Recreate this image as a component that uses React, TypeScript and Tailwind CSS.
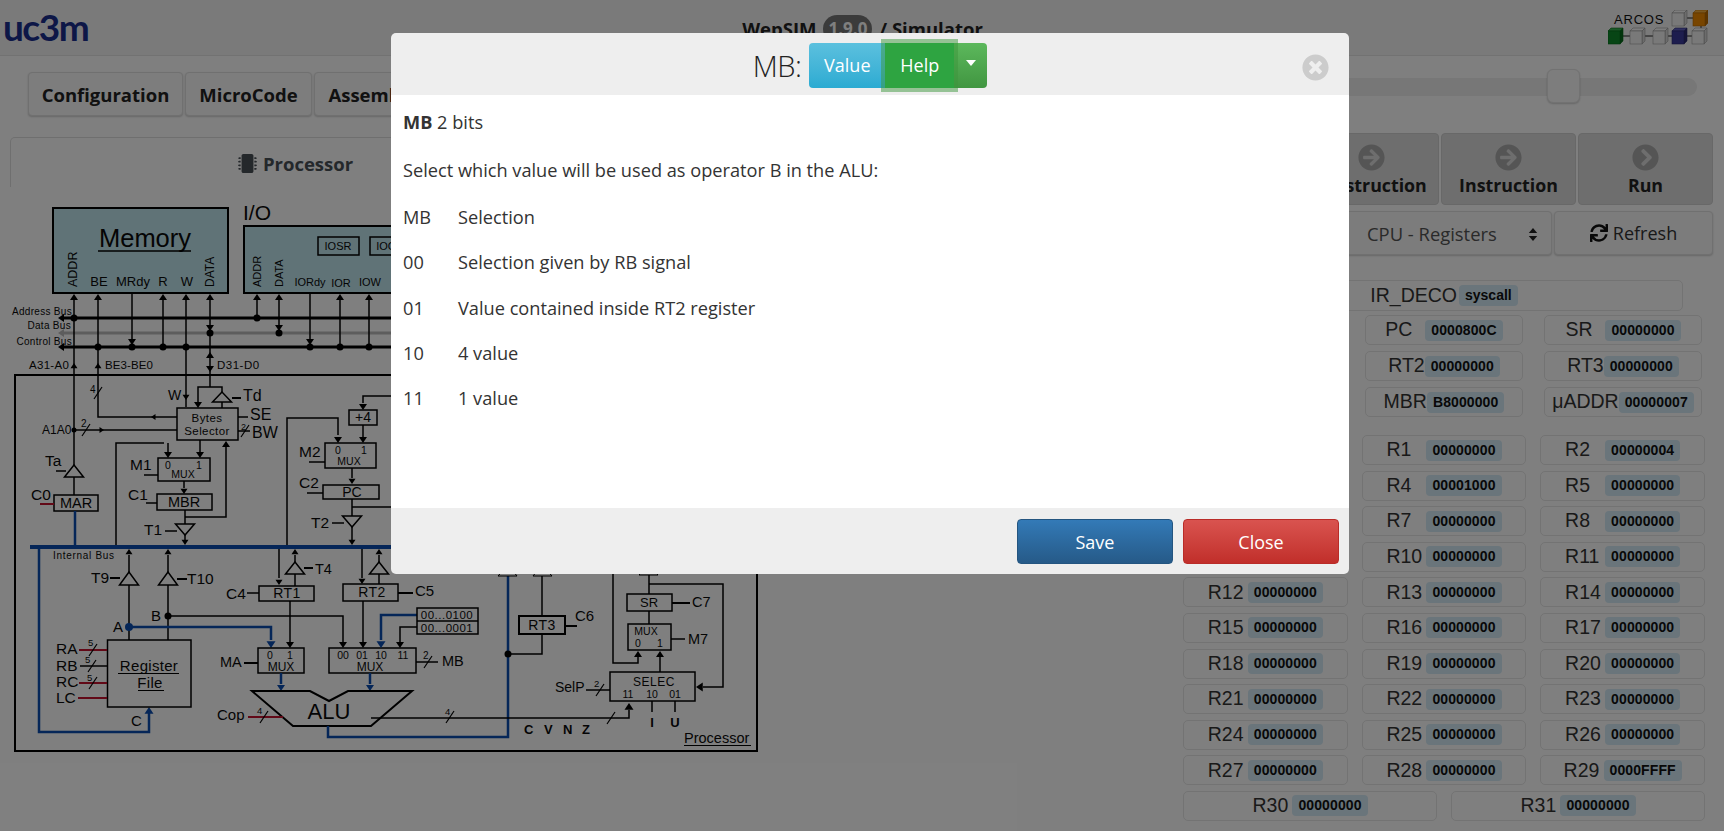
import React from 'react';
import { FaArrowCircleRight, FaChevronCircleRight, FaMicrochip, FaSync, FaTimesCircle } from 'react-icons/fa';

const BLUE = '#0a4db0';
const RED = '#c4122f';

const Wire = ({ d, c = '#000', w = 1.5 }: { d: string; c?: string; w?: number }) => (
  <path d={d} fill="none" stroke={c} strokeWidth={w} />
);

const Head = ({ x, y, dir, c = '#000', s = 5 }: { x: number; y: number; dir: 'u' | 'd' | 'l' | 'r'; c?: string; s?: number }) => {
  const l = s * 1.5;
  const pts = {
    u: `${x},${y} ${x - s},${y + l} ${x + s},${y + l}`,
    d: `${x},${y} ${x - s},${y - l} ${x + s},${y - l}`,
    l: `${x},${y} ${x + l},${y - s} ${x + l},${y + s}`,
    r: `${x},${y} ${x - l},${y - s} ${x - l},${y + s}`,
  }[dir];
  return <polygon points={pts} fill={c} />;
};

const Lbl = ({ x, y, s = 15, a = 'start', b = false, rot = false, sp = 0, children }: { x: number; y: number; s?: number; a?: 'start' | 'middle' | 'end'; b?: boolean; rot?: boolean; sp?: number; children: React.ReactNode }) => (
  <text x={x} y={y} fontSize={s} textAnchor={a} fontWeight={b ? 700 : 400} letterSpacing={sp} fill="#0a0a0a" transform={rot ? `rotate(-90 ${x} ${y})` : undefined}>
    {children}
  </text>
);

const Box = ({ x, y, w, h, sw = 1.5 }: { x: number; y: number; w: number; h: number; sw?: number }) => (
  <rect x={x} y={y} width={w} height={h} fill="none" stroke="#000" strokeWidth={sw} />
);

const Dot = ({ x, y, c = '#000', r = 3.5 }: { x: number; y: number; c?: string; r?: number }) => <circle cx={x} cy={y} r={r} fill={c} />;

// tri-state buffers, apex first
const Tri = ({ x, y, h = 12, up = true }: { x: number; y: number; h?: number; up?: boolean }) => (
  <polygon points={`${x},${y} ${x - 9.5},${up ? y + h : y - h} ${x + 9.5},${up ? y + h : y - h}`} fill="#fff" stroke="#000" strokeWidth={1.5} />
);

const Slash = ({ x, y }: { x: number; y: number }) => <line x1={x - 4} y1={y + 6} x2={x + 4} y2={y - 6} stroke="#000" strokeWidth={1.2} />;

const ProcessorDiagram = () => (
  <svg viewBox="0 190 770 570" className="block w-[770px] h-[570px] [font-family:'Liberation_Sans',sans-serif]">
    {/* Memory and I/O */}
    <rect x={53} y={208} width={175} height={85} fill="#c0e6ee" stroke="#000" strokeWidth={2} />
    <Lbl x={145} y={247} s={25.5} a="middle">Memory</Lbl>
    <line x1={98} y1={251} x2={191} y2={251} stroke="#000" strokeWidth={1.5} />
    <Lbl x={77} y={287} s={12.5} rot>ADDR</Lbl>
    <Lbl x={214} y={287} s={12} rot>DATA</Lbl>
    <Lbl x={99} y={286} s={13} a="middle">BE</Lbl>
    <Lbl x={133} y={286} s={13} a="middle">MRdy</Lbl>
    <Lbl x={163} y={286} s={13} a="middle">R</Lbl>
    <Lbl x={187} y={286} s={13} a="middle">W</Lbl>
    <Lbl x={243} y={220} s={21}>I/O</Lbl>
    <rect x={244} y={226} width={370} height={67} fill="#c0e6ee" stroke="#000" strokeWidth={2} />
    <Box x={318} y={237} w={41} h={18} />
    <Lbl x={338} y={250} s={11} a="middle">IOSR</Lbl>
    <Box x={370} y={237} w={41} h={18} />
    <Lbl x={390} y={250} s={11} a="middle">IOCR</Lbl>
    <Lbl x={261} y={287} s={11} rot>ADDR</Lbl>
    <Lbl x={283} y={287} s={11} rot>DATA</Lbl>
    <Lbl x={310} y={286} s={11} a="middle">IORdy</Lbl>
    <Lbl x={341} y={287} s={11} a="middle">IOR</Lbl>
    <Lbl x={370} y={286} s={11} a="middle">IOW</Lbl>

    {/* System buses */}
    <Lbl x={72} y={315} s={10} a="end" sp={0.3}>Address Bus</Lbl>
    <Lbl x={71} y={329} s={10} a="end" sp={0.3}>Data Bus</Lbl>
    <Lbl x={72} y={345} s={10} a="end" sp={0.3}>Control Bus</Lbl>
    <Wire d="M62 318H610" w={3} />
    <Wire d="M62 333H610" c="#bbb" w={3} />
    <Wire d="M62 347H610" w={3} />
    <Head x={58} y={318} dir="l" s={4} />
    <Head x={58} y={333} dir="l" s={4} c="#bbb" />
    <Head x={58} y={347} dir="l" s={4} />
    <Lbl x={29} y={369} s={11.5} sp={0.3}>A31-A0</Lbl>
    <Lbl x={105} y={369} s={11.5} sp={0.1}>BE3-BE0</Lbl>
    <Lbl x={217} y={369} s={11.5} sp={0.5}>D31-D0</Lbl>

    {/* Processor frame */}
    <Box x={15} y={375} w={742} h={376} sw={2} />

    {/* Memory connections */}
    <Wire d="M74 296V465" />
    <Head x={74} y={294} dir="u" s={4} />
    <Head x={74} y={363} dir="u" s={3.5} />
    <Dot x={74} y={318} />
    <Wire d="M98 296V417H177" />
    <Head x={98} y={294} dir="u" s={4} />
    <Head x={98} y={363} dir="u" s={3.5} />
    <Head x={151} y={417} dir="l" s={3} />
    <Dot x={98} y={347} />
    <Slash x={98} y={393} />
    <Lbl x={90} y={393} s={10}>4</Lbl>
    <Wire d="M132 293V342" />
    <Head x={132} y={345} dir="d" s={4} />
    <Dot x={132} y={347} />
    <Wire d="M163 296V347" />
    <Head x={163} y={294} dir="u" s={4} />
    <Dot x={163} y={347} />
    <Wire d="M186 296V407" />
    <Head x={186} y={294} dir="u" s={4} />
    <Head x={186} y={400} dir="d" s={3.5} />
    <Dot x={186} y={347} />
    <Wire d="M210 296V387M198 405V387H222V393M222 402V408" />
    <Head x={210} y={294} dir="u" s={4} />
    <Head x={210} y={331} dir="d" s={4} />
    <Head x={210} y={352} dir="u" s={4} />
    <Head x={210} y={372} dir="d" s={4} />
    <Head x={198} y={408} dir="d" s={4} />
    <Dot x={210} y={333} />
    <Wire d="M257 296V318M279 296V333M310 293V342M340 296V347M369 296V347" />
    <Head x={257} y={294} dir="u" s={4} />
    <Dot x={257} y={318} />
    <Head x={279} y={294} dir="u" s={4} />
    <Head x={279} y={331} dir="d" s={4} />
    <Dot x={279} y={333} />
    <Head x={310} y={345} dir="d" s={4} />
    <Dot x={310} y={347} />
    <Head x={340} y={294} dir="u" s={4} />
    <Dot x={340} y={347} />
    <Head x={369} y={294} dir="u" s={4} />
    <Dot x={369} y={347} />

    {/* Bytes selector */}
    <Tri x={222} y={392} h={10} />
    <Wire d="M232 398H241" w={2} />
    <Lbl x={243} y={401} s={16}>Td</Lbl>
    <Lbl x={168} y={400} s={14}>W</Lbl>
    <Box x={177} y={408} w={61} h={32} />
    <Lbl x={207} y={422} s={11.5} a="middle" sp={0.4}>Bytes</Lbl>
    <Lbl x={207} y={435} s={11.5} a="middle" sp={0.4}>Selector</Lbl>
    <Wire d="M238 417H248M238 431H250" />
    <Lbl x={250} y={420} s={16}>SE</Lbl>
    <Lbl x={252} y={438} s={16}>BW</Lbl>
    <Lbl x={241} y={430} s={9}>2</Lbl>
    <Slash x={245} y={431} />
    <Lbl x={42} y={434} s={12}>A1A0</Lbl>
    <Wire d="M74 430H177" />
    <Dot x={74} y={430} r={2.5} />
    <Head x={104} y={430} dir="r" s={3} />
    <Lbl x={81} y={427} s={10}>2</Lbl>
    <Slash x={86} y={430} />

    {/* MAR */}
    <Tri x={74} y={465} />
    <Wire d="M56 471H66" />
    <Lbl x={45} y={466} s={15.5}>Ta</Lbl>
    <Wire d="M74 477V495" />
    <Box x={54} y={495} w={44} h={16} />
    <Lbl x={76} y={508} s={14.5} a="middle">MAR</Lbl>
    <Lbl x={31} y={500} s={15.5}>C0</Lbl>
    <Wire d="M40 504H54" c={RED} w={2} />
    <Wire d="M75 511V547" c={BLUE} w={2.5} />

    {/* MBR */}
    <Wire d="M116 547V443H164" />
    <Head x={168} y={458} dir="d" s={4} />
    <Wire d="M168 443V452" />
    <Wire d="M200 440V452" />
    <Head x={200} y={458} dir="d" s={4} />
    <Box x={158} y={458} w={52} h={23} />
    <Lbl x={168} y={469} s={10.5} a="middle">0</Lbl>
    <Lbl x={199} y={469} s={10.5} a="middle">1</Lbl>
    <Lbl x={183} y={478} s={10.5} a="middle">MUX</Lbl>
    <Lbl x={130} y={470} s={15.5}>M1</Lbl>
    <Wire d="M144 475H158" />
    <Wire d="M184 481V488" />
    <Head x={184} y={494} dir="d" s={3.5} />
    <Box x={157} y={494} w={55} h={16} />
    <Lbl x={184} y={507} s={14.5} a="middle">MBR</Lbl>
    <Lbl x={128} y={500} s={15.5}>C1</Lbl>
    <Wire d="M146 503H157" />
    <Wire d="M185 510V524M185 517H226V447" />
    <Head x={226} y={441} dir="u" s={4} />
    <Tri x={185} y={535} h={11} up={false} />
    <Wire d="M185 535V540" />
    <Head x={185} y={545} dir="d" s={3.5} />
    <Lbl x={144} y={535} s={15.5}>T1</Lbl>
    <Wire d="M165 531H177" />

    {/* PC */}
    <Wire d="M287 547V418H338V435" />
    <Head x={338} y={443} dir="d" s={4} />
    <Wire d="M420 396H363V403" />
    <Head x={363} y={410} dir="d" s={4} />
    <Box x={349} y={410} w={28} h={15} />
    <Lbl x={363} y={422} s={14} a="middle">+4</Lbl>
    <Wire d="M363 425V437" />
    <Head x={363} y={443} dir="d" s={4} />
    <Box x={325} y={443} w={51} h={25} />
    <Lbl x={338} y={454} s={10.5} a="middle">0</Lbl>
    <Lbl x={364} y={454} s={10.5} a="middle">1</Lbl>
    <Lbl x={349} y={465} s={10.5} a="middle">MUX</Lbl>
    <Lbl x={299} y={457} s={15.5}>M2</Lbl>
    <Wire d="M309 462H325" />
    <Wire d="M352 468V478" />
    <Head x={352} y={484} dir="d" s={3.5} />
    <Box x={323} y={485} w={56} h={14} />
    <Lbl x={352} y={497} s={14} a="middle">PC</Lbl>
    <Lbl x={299} y={488} s={15.5}>C2</Lbl>
    <Wire d="M307 493H323" />
    <Wire d="M352 499V516M352 507H420" />
    <Tri x={352} y={527} h={11} up={false} />
    <Wire d="M352 527V540" />
    <Head x={352} y={545} dir="d" s={3.5} />
    <Lbl x={311} y={528} s={15.5}>T2</Lbl>
    <Wire d="M332 523H344" />

    {/* Internal bus */}
    <Wire d="M30 547H620" c={BLUE} w={4} />
    <Lbl x={53} y={559} s={10} sp={0.7}>Internal Bus</Lbl>
    <Wire d="M39 547V732H149V712" c={BLUE} w={2.5} />
    <Head x={149} y={707} dir="u" c={BLUE} s={4.5} />

    {/* Register file */}
    <Wire d="M129 555V572M129 585V640M168 555V572M168 585V640" />
    <Head x={129} y={549} dir="u" s={3.5} />
    <Head x={168} y={549} dir="u" s={3.5} />
    <Tri x={129} y={572} h={13} />
    <Tri x={168} y={572} h={13} />
    <Lbl x={91} y={583} s={15.5}>T9</Lbl>
    <Wire d="M110 578H120" w={2} />
    <Lbl x={187} y={584} s={15.5}>T10</Lbl>
    <Wire d="M177 579H187" w={2} />
    <Lbl x={151} y={621} s={15}>B</Lbl>
    <Dot x={168} y={616} />
    <Wire d="M168 616H343V642" />
    <Head x={343} y={648} dir="d" s={4} />
    <Lbl x={113} y={632} s={15}>A</Lbl>
    <Dot x={129} y={627} c={BLUE} r={4} />
    <Wire d="M129 627H271V640" c={BLUE} w={2.5} />
    <Head x={271} y={648} dir="d" c={BLUE} s={4.5} />
    <Box x={107.5} y={640} w={83.5} h={67} />
    <Lbl x={149} y={671} s={15} a="middle" sp={0.3}>Register</Lbl>
    <line x1={118} y1={673.5} x2={179} y2={673.5} stroke="#000" />
    <Lbl x={150} y={688} s={15} a="middle" sp={0.3}>File</Lbl>
    <line x1={138} y1={690.5} x2={164} y2={690.5} stroke="#000" />
    <Lbl x={56} y={654} s={15.5}>RA</Lbl>
    <Lbl x={56} y={671} s={15.5}>RB</Lbl>
    <Lbl x={56} y={687} s={15.5}>RC</Lbl>
    <Lbl x={56} y={703} s={15.5}>LC</Lbl>
    <Wire d="M79 650H107M79 683H107M78 698H107" c={RED} w={2} />
    <Wire d="M80 666H107" />
    <Lbl x={88} y={646} s={9.5}>5</Lbl>
    <Slash x={93} y={650} />
    <Lbl x={85} y={663} s={9.5}>5</Lbl>
    <Slash x={92} y={666} />
    <Lbl x={87} y={681} s={9.5}>5</Lbl>
    <Slash x={93} y={683} />
    <Lbl x={131} y={726} s={15}>C</Lbl>

    {/* RT1, RT2 */}
    <Lbl x={226} y={599} s={15.5}>C4</Lbl>
    <Wire d="M247 593H259" />
    <Box x={259} y={586} w={55} h={15} />
    <Lbl x={287} y={598} s={14} a="middle" sp={0.5}>RT1</Lbl>
    <Wire d="M279 549V578" />
    <Head x={279} y={585} dir="d" s={3.5} />
    <Wire d="M295 555V562M295 574V586" />
    <Head x={295} y={549} dir="u" s={3.5} />
    <Tri x={295} y={562} />
    <Lbl x={315} y={574} s={14.5}>T4</Lbl>
    <Wire d="M304 568H313" w={2} />
    <Wire d="M290 601V642" />
    <Head x={290} y={648} dir="d" s={4} />
    <Box x={343} y={584} w={55} h={17} />
    <Lbl x={372} y={597} s={14} a="middle" sp={0.5}>RT2</Lbl>
    <Wire d="M362 549V578" />
    <Head x={362} y={584} dir="d" s={3.5} />
    <Wire d="M379 555V562M379 574V584" />
    <Head x={379} y={549} dir="u" s={3.5} />
    <Tri x={379} y={562} />
    <Wire d="M398 593H413" w={2} />
    <Lbl x={415} y={596} s={15}>C5</Lbl>
    <Wire d="M363 601V642" />
    <Head x={363} y={648} dir="d" s={4} />

    {/* Muxes and ALU */}
    <Box x={258} y={648} w={46} h={25} />
    <Lbl x={270} y={659} s={10.5} a="middle">0</Lbl>
    <Lbl x={290} y={659} s={10.5} a="middle">1</Lbl>
    <Lbl x={281} y={671} s={12} a="middle">MUX</Lbl>
    <Lbl x={220} y={667} s={14.5}>MA</Lbl>
    <Wire d="M244 663H258" w={2} />
    <Box x={329} y={648} w={87} h={25} />
    <Lbl x={343} y={659} s={10.5} a="middle">00</Lbl>
    <Lbl x={362} y={659} s={10.5} a="middle">01</Lbl>
    <Lbl x={381} y={659} s={10.5} a="middle">10</Lbl>
    <Lbl x={403} y={659} s={10.5} a="middle">11</Lbl>
    <Lbl x={370} y={671} s={12} a="middle">MUX</Lbl>
    <Wire d="M417 615H381V640" c={BLUE} w={2.5} />
    <Head x={381} y={648} dir="d" c={BLUE} s={4.5} />
    <Wire d="M417 627H400V642" />
    <Head x={400} y={648} dir="d" s={4} />
    <Box x={417} y={608} w={61} h={26} />
    <line x1={417} y1={621} x2={478} y2={621} stroke="#000" strokeWidth={1.5} />
    <Lbl x={447} y={619} s={11.5} a="middle" sp={0.5}>00...0100</Lbl>
    <Lbl x={447} y={632} s={11.5} a="middle" sp={0.5}>00...0001</Lbl>
    <Wire d="M416 662H438" />
    <Lbl x={423} y={659} s={10}>2</Lbl>
    <Slash x={428} y={662} />
    <Lbl x={442} y={666} s={14.5}>MB</Lbl>
    <Wire d="M281 673V684" c={BLUE} w={2.5} />
    <Head x={281} y={691} dir="d" c={BLUE} s={4} />
    <Wire d="M370 673V684" c={BLUE} w={2.5} />
    <Head x={370} y={691} dir="d" c={BLUE} s={4} />
    <polygon points="252,691 310,691 329,701 348,691 412,691 371,726 293,726" fill="none" stroke="#000" strokeWidth={2} />
    <Lbl x={329} y={719} s={22} a="middle">ALU</Lbl>
    <Lbl x={217} y={720} s={15}>Cop</Lbl>
    <Wire d="M248 717H283" c={RED} w={2} />
    <Lbl x={257} y={714} s={9.5}>4</Lbl>
    <Slash x={264} y={717} />
    <Wire d="M328 726V737H508V570" c={BLUE} w={2.5} />
    <Dot x={508} y={654} />
    <Wire d="M508 654H542V634" />
    <Box x={519} y={616} w={46} h={18} sw={2} />
    <Lbl x={542} y={630} s={14} a="middle" sp={0.5}>RT3</Lbl>
    <Lbl x={575} y={621} s={15}>C6</Lbl>
    <Wire d="M565 626H577" w={2} />
    <Wire d="M542 616V574" />
    <polygon points="498,576 517,576 508,565" fill="#fff" stroke="#000" />
    <polygon points="533,576 552,576 542,565" fill="#fff" stroke="#000" />

    {/* Flags to SELEC */}
    <Wire d="M371 718H629V710" />
    <Head x={629} y={703} dir="u" s={4.5} />
    <Lbl x={445} y={715} s={9.5}>4</Lbl>
    <Slash x={450} y={717} />
    <Slash x={611} y={718} />
    <Lbl x={524} y={734} s={13} b>C</Lbl>
    <Lbl x={544} y={734} s={13} b>V</Lbl>
    <Lbl x={563} y={734} s={13} b>N</Lbl>
    <Lbl x={582} y={734} s={13} b>Z</Lbl>
    <Box x={610} y={672} w={85} h={29} />
    <Lbl x={654} y={686} s={12} a="middle" sp={0.5}>SELEC</Lbl>
    <Lbl x={628} y={698} s={10.5} a="middle">11</Lbl>
    <Lbl x={652} y={698} s={10.5} a="middle">10</Lbl>
    <Lbl x={675} y={698} s={10.5} a="middle">01</Lbl>
    <Wire d="M652 701V712M675 701V712" />
    <Lbl x={652} y={727} s={13} a="middle" b>I</Lbl>
    <Lbl x={675} y={727} s={13} a="middle" b>U</Lbl>
    <Lbl x={555} y={692} s={14}>SelP</Lbl>
    <Wire d="M586 690H610" />
    <Lbl x={594} y={687} s={9.5}>2</Lbl>
    <Slash x={600} y={690} />

    {/* SR */}
    <Box x={627} y={594} w={45} h={17} />
    <Lbl x={649} y={607} s={13} a="middle">SR</Lbl>
    <Lbl x={692} y={607} s={14.5}>C7</Lbl>
    <Wire d="M672 603H690" w={2} />
    <Wire d="M649 574V594M649 611V624M649 584H723V687H703" />
    <Head x={696} y={687} dir="l" s={4.5} />
    <polygon points="639,575 658,575 649,565" fill="#fff" stroke="#000" />
    <Box x={628} y={624} w={43} h={26} />
    <Lbl x={646} y={635} s={10.5} a="middle">MUX</Lbl>
    <Lbl x={638} y={647} s={10.5} a="middle">0</Lbl>
    <Lbl x={660} y={647} s={10.5} a="middle">1</Lbl>
    <Lbl x={688} y={644} s={14.5}>M7</Lbl>
    <Wire d="M671 639H685" />
    <Wire d="M613 570V663H638V656" />
    <Head x={638} y={651} dir="u" s={4} />
    <Wire d="M660 672V656" />
    <Head x={660} y={651} dir="u" s={4} />

    <Lbl x={684} y={743} s={14.5}>Processor</Lbl>
    <line x1={684} y1={745.5} x2={751} y2={745.5} stroke="#000" />
  </svg>
);

const Cube = ({ x, y, w = 12, h = 16, front = '#f2f2f2', top = '#fafafa', side = '#d8d8d8', edge = '#999' }: { x: number; y: number; w?: number; h?: number; front?: string; top?: string; side?: string; edge?: string }) => (
  <g stroke={edge} strokeWidth={0.6}>
    <polygon points={`${x},${y + 3} ${x + 3},${y} ${x + w + 3},${y} ${x + w},${y + 3}`} fill={top} />
    <polygon points={`${x + w},${y + 3} ${x + w + 3},${y} ${x + w + 3},${y + h - 3} ${x + w},${y + h}`} fill={side} />
    <rect x={x} y={y + 3} width={w} height={h - 3} fill={front} />
  </g>
);

const ArcosLogo = () => (
  <div className="relative w-[100px] h-[35px]">
    <span className="absolute left-[6px] top-[3px] text-[13px] leading-[14px] tracking-[0.8px] text-[#111] [font-family:'Liberation_Sans',sans-serif]">ARCOS</span>
    <svg viewBox="0 0 100 35" className="block w-[100px] h-[35px]">
      <path d="M15 26H22M37 26H45M60 26H64M79 26H84M76 8H85M93 15V19" stroke="#222" strokeWidth={1} fill="none" />
      <Cube x={64} y={0} />
      <Cube x={85} y={0} front="#f08a00" top="#f5b040" side="#b86a00" edge="#b86a00" />
      <Cube x={0} y={18} front="#0e8a2a" top="#35b050" side="#066a1a" edge="#066a1a" />
      <Cube x={22} y={18} />
      <Cube x={45} y={18} />
      <Cube x={64} y={18} front="#3b3a9c" top="#6060c0" side="#2a2a70" edge="#2a2a70" />
      <Cube x={84} y={18} />
    </svg>
  </div>
);

const Reg = ({ name, value, nameW = 'min-w-[40px]' }: { name: string; value: string; nameW?: string }) => (
  <div className="h-[30px] flex items-center justify-center border border-[#e6e6e6] rounded-[5px] [font-family:'Liberation_Sans',sans-serif]">
    <span className={`${nameW} text-[19.5px] leading-none text-[#333]`}>{name}</span>
    <span className="bg-[#d4ebf7] rounded-[4px] px-[6px] h-[21px] flex items-center text-[14px] font-bold tracking-[0.1px] text-[#111]">{value}</span>
  </div>
);

// R0, R3, R6 and R9 sit behind the dialog
const hiddenRegs = [0, 3, 6, 9];
const registers: [number, string][] = Array.from({ length: 30 }, (_, i) => {
  const special: Record<number, string> = { 2: '00000004', 4: '00001000', 29: '0000FFFF' };
  return [i, special[i] ?? '00000000'] as [number, string];
});

const ActionButton = ({ icon, label }: { icon: React.ReactNode; label: string }) => (
  <div className="w-[135px] h-[72px] flex flex-col items-center justify-start pt-[10px] bg-[#dcdcdc] border border-[#d0d0d0] rounded-[4px]">
    <span className="text-[27px] text-[#aaa] leading-none">{icon}</span>
    <span className="text-[17.8px] font-bold leading-[28px] text-[#222]">{label}</span>
  </div>
);

const helpRows = [
  ['MB', 'Selection'],
  ['00', 'Selection given by RB signal'],
  ['01', 'Value contained inside RT2 register'],
  ['10', '4 value'],
  ['11', '1 value'],
];

const App: React.FC = () => {
  return (
    <div className="relative w-[1724px] h-[831px] overflow-hidden bg-white text-[#333] [font-family:'Open_Sans',sans-serif]">
      {/* Top bar */}
      <header className="h-[56px] flex items-center bg-[#f5f5f5] border-b border-[#e4e4e4] pr-[16px]">
        <div className="flex-1 pl-[3px]">
          <span className="text-[37px] leading-none font-bold tracking-[-1.5px] text-[#1a2f8f] [font-family:'Lato',sans-serif]">uc3m</span>
        </div>
        <div className="flex items-center gap-[7px] ml-[14px] pt-[3px] text-[18.5px] font-bold text-[#222]">
          <span>WepSIM</span>
          <span className="bg-[#777] text-white rounded-full w-[49px] h-[28px] flex items-center justify-center text-[17px]">1.9.0</span>
          <span>/ Simulator</span>
        </div>
        <div className="flex-1 flex justify-end">
          <ArcosLogo />
        </div>
      </header>

      <div className="flex">
        {/* Left: toolbar and circuit */}
        <div className="w-[1183px] shrink-0">
          <div className="flex gap-[2px] mt-[16px] ml-[28px] text-[18.5px] font-bold text-[#222]">
            <div className="w-[155px] h-[44px] flex items-center justify-center pt-[2px] bg-[#fafafa] border border-[#e0e0e0] rounded-[4px] shadow-[0_1px_2px_rgba(0,0,0,0.2)]">Configuration</div>
            <div className="w-[127px] h-[44px] flex items-center justify-center pt-[2px] bg-[#fafafa] border border-[#e0e0e0] rounded-[4px] shadow-[0_1px_2px_rgba(0,0,0,0.2)]">MicroCode</div>
            <div className="w-[117px] h-[44px] flex items-center justify-center pt-[2px] bg-[#fafafa] border border-[#e0e0e0] rounded-[4px] shadow-[0_1px_2px_rgba(0,0,0,0.2)]">Assembly</div>
          </div>
          <div className="mt-[21px] ml-[10px] w-[571px] h-[50px] flex items-center justify-center gap-[6px] pt-[2px] border-t border-x border-[#dedede] rounded-t-[5px] text-[18.5px] font-bold text-[#495057]">
            <FaMicrochip className="text-[19px]" />
            <span>Processor</span>
          </div>
          <div className="mt-[3px]">
            <ProcessorDiagram />
          </div>
        </div>

        {/* Right: controls and registers */}
        <div className="flex-1 min-w-0">
          <div className="relative mt-[22px] mr-[27px] h-[18px] bg-[#eee] rounded-full">
            <div className="absolute left-[364px] top-[-9px] w-[33px] h-[34px] bg-[#fafafa] border border-[#e4e4e4] rounded-[6px] shadow-[0_1px_2px_rgba(0,0,0,0.2)]" />
          </div>

          <div className="mt-[37px] flex justify-end gap-[2px] pr-[11px]">
            <ActionButton icon={<FaArrowCircleRight />} label="μInstruction" />
            <ActionButton icon={<FaArrowCircleRight />} label="Instruction" />
            <ActionButton icon={<FaChevronCircleRight />} label="Run" />
          </div>

          <div className="mt-[6px] flex justify-end gap-[2px] pr-[11px]">
            <div className="w-[369px] h-[44px] flex items-center justify-between pl-[183px] pr-[13px] pt-[2px] text-[18.4px] bg-[#f8f8f8] border border-[#e0e0e0] rounded-[4px] shadow-[0_1px_2px_rgba(0,0,0,0.2)] text-[#555]">
              <span>CPU - Registers</span>
              <svg viewBox="0 0 10 16" className="w-[10px] h-[15px]"><path d="M5 1L9.5 6.5H.5zM5 15L.5 9.5h9z" fill="#222" /></svg>
            </div>
            <div className="w-[159px] h-[44px] flex items-center justify-center gap-[5px] bg-[#f8f8f8] border border-[#e0e0e0] rounded-[4px] shadow-[0_1px_2px_rgba(0,0,0,0.2)] text-[#333]">
              <FaSync className="text-[18px] text-[#111]" />
              <span className="text-[18px]">Refresh</span>
            </div>
          </div>

          <div className="mt-[25px] ml-[22px] w-[478px] h-[31px] flex items-center justify-center gap-[2px] border border-[#e6e6e6] rounded-[5px] [font-family:'Liberation_Sans',sans-serif]">
            <span className="text-[19.5px] leading-none text-[#333]">IR_DECO</span>
            <span className="bg-[#d4ebf7] rounded-[4px] px-[6px] h-[21px] flex items-center text-[14px] font-bold text-[#111]">syscall</span>
          </div>

          <div className="mt-[4px] ml-[182px] w-[337px] grid grid-cols-2 gap-x-[21px] gap-y-[6px]">
            <Reg name="PC" value="0000800C" />
            <Reg name="SR" value="00000000" />
            <Reg name="RT2" value="00000000" nameW="" />
            <Reg name="RT3" value="00000000" nameW="" />
            <Reg name="MBR" value="B8000000" nameW="" />
            <Reg name="μADDR" value="00000007" nameW="" />
          </div>

          <div className="mt-[18px] w-[522px] grid grid-cols-3 gap-x-[14px] gap-y-[5.6px]">
            {registers.map(([i, value]) =>
              hiddenRegs.includes(i) ? <div key={i} className="h-[30px]" /> : <Reg key={i} name={`R${i}`} value={value} />
            )}
          </div>
          <div className="mt-[5.6px] w-[522px] grid grid-cols-2 gap-x-[14px]">
            <Reg name="R30" value="00000000" />
            <Reg name="R31" value="00000000" />
          </div>
        </div>
      </div>

      {/* Dialog */}
      <div className="absolute inset-0 bg-black/50">
        <div className="mt-[33px] ml-[391px] w-[958px] rounded-[5px] overflow-hidden">
          <div className="relative h-[62px] flex items-center justify-center gap-[8px] pt-[3px] bg-[#eee]">
            <span className="text-[29px] font-light text-[#222] tracking-[-0.5px]">MB:</span>
            <div className="flex h-[45px] text-[18px] text-white">
              <div className="w-[76px] flex items-center justify-center rounded-l-[4px] bg-gradient-to-b from-[#5bc0de] to-[#2aabd2]">Value</div>
              <div className="relative z-10 w-[69px] flex items-center justify-center bg-[#2ea441] shadow-[0_0_0_4px_rgba(60,150,60,0.5)]">Help</div>
              <div className="w-[33px] flex items-start justify-center pt-[17px] rounded-r-[4px] bg-gradient-to-b from-[#5cb85c] to-[#419641]">
                <svg viewBox="0 0 10 6" className="w-[10px] h-[6px]"><path d="M0 0h10L5 6z" fill="#fff" /></svg>
              </div>
            </div>
            <FaTimesCircle className="absolute right-[20px] top-[21px] text-[27px] text-[#ccc]" />
          </div>

          <div className="h-[413px] bg-white px-[12px] pt-[14px] text-[18.2px] leading-[26px] text-[#333]">
            <p><strong>MB</strong> 2 bits</p>
            <p className="mt-[22px]">Select which value will be used as operator B in the ALU:</p>
            <div className="mt-[21px] grid grid-cols-[55px_1fr] gap-y-[19.3px]">
              {helpRows.map(([k, v]) => (
                <React.Fragment key={k}>
                  <span>{k}</span>
                  <span>{v}</span>
                </React.Fragment>
              ))}
            </div>
          </div>

          <div className="h-[66px] flex justify-end gap-[10px] pt-[11px] pr-[10px] bg-[#eee] text-[18px] text-white">
            <div className="w-[156px] h-[45px] flex items-center justify-center pt-[2px] rounded-[4px] border border-[#245580] bg-gradient-to-b from-[#337ab7] to-[#265a88]">Save</div>
            <div className="w-[156px] h-[45px] flex items-center justify-center pt-[2px] rounded-[4px] border border-[#b92c28] bg-gradient-to-b from-[#d9534f] to-[#c12e2a]">Close</div>
          </div>
        </div>
      </div>
    </div>
  );
};

export default App;
